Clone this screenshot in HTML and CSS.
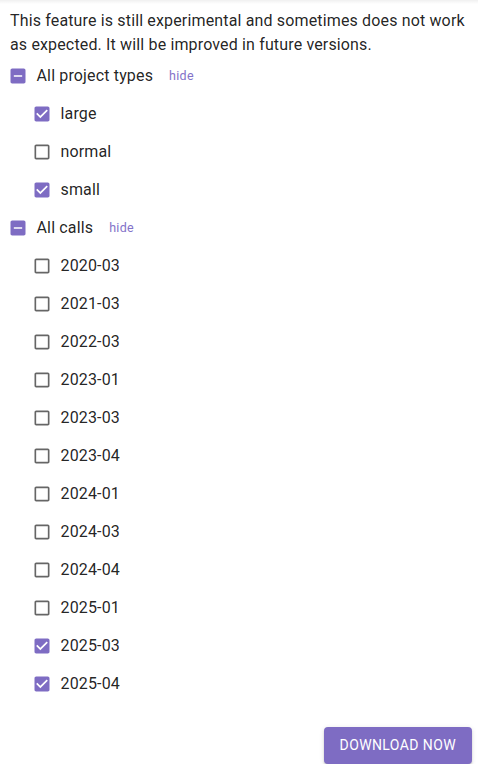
FILE: index.html
```html
<!DOCTYPE html>
<html lang="en">
<head>
<meta charset="utf-8">
<title>Download</title>
<link rel="stylesheet" href="styles.css">
</head>
<body>
<main class="panel">
  <p class="note">This feature is still experimental and sometimes does not work as expected. It will be improved in future versions.</p>

  <div class="group">
    <label class="row">
      <span class="cb"><svg viewBox="0 0 24 24" class="on"><path d="M19 3H5c-1.1 0-2 .9-2 2v14c0 1.1.9 2 2 2h14c1.1 0 2-.9 2-2V5c0-1.1-.9-2-2-2zm-2 10H7v-2h10v2z"/></svg></span>
      <span class="label">All project types</span>
      <span class="hide">hide</span>
    </label>
    <div class="children">
      <label class="row"><span class="cb"><svg viewBox="0 0 24 24" class="on"><path d="M19 3H5c-1.11 0-2 .9-2 2v14c0 1.1.89 2 2 2h14c1.11 0 2-.9 2-2V5c0-1.1-.89-2-2-2zm-9 14l-5-5 1.41-1.41L10 14.17l7.59-7.59L19 8l-9 9z"/></svg></span><span class="label">large</span></label>
      <label class="row"><span class="cb"><svg viewBox="0 0 24 24" class="off"><path d="M19 5v14H5V5h14m0-2H5c-1.1 0-2 .9-2 2v14c0 1.1.9 2 2 2h14c1.1 0 2-.9 2-2V5c0-1.1-.9-2-2-2z"/></svg></span><span class="label">normal</span></label>
      <label class="row"><span class="cb"><svg viewBox="0 0 24 24" class="on"><path d="M19 3H5c-1.11 0-2 .9-2 2v14c0 1.1.89 2 2 2h14c1.11 0 2-.9 2-2V5c0-1.1-.89-2-2-2zm-9 14l-5-5 1.41-1.41L10 14.17l7.59-7.59L19 8l-9 9z"/></svg></span><span class="label">small</span></label>
    </div>
  </div>

  <div class="group">
    <label class="row">
      <span class="cb"><svg viewBox="0 0 24 24" class="on"><path d="M19 3H5c-1.1 0-2 .9-2 2v14c0 1.1.9 2 2 2h14c1.1 0 2-.9 2-2V5c0-1.1-.9-2-2-2zm-2 10H7v-2h10v2z"/></svg></span>
      <span class="label">All calls</span>
      <span class="hide">hide</span>
    </label>
    <div class="children">
      <label class="row"><span class="cb"><svg viewBox="0 0 24 24" class="off"><path d="M19 5v14H5V5h14m0-2H5c-1.1 0-2 .9-2 2v14c0 1.1.9 2 2 2h14c1.1 0 2-.9 2-2V5c0-1.1-.9-2-2-2z"/></svg></span><span class="label">2020-03</span></label>
      <label class="row"><span class="cb"><svg viewBox="0 0 24 24" class="off"><path d="M19 5v14H5V5h14m0-2H5c-1.1 0-2 .9-2 2v14c0 1.1.9 2 2 2h14c1.1 0 2-.9 2-2V5c0-1.1-.9-2-2-2z"/></svg></span><span class="label">2021-03</span></label>
      <label class="row"><span class="cb"><svg viewBox="0 0 24 24" class="off"><path d="M19 5v14H5V5h14m0-2H5c-1.1 0-2 .9-2 2v14c0 1.1.9 2 2 2h14c1.1 0 2-.9 2-2V5c0-1.1-.9-2-2-2z"/></svg></span><span class="label">2022-03</span></label>
      <label class="row"><span class="cb"><svg viewBox="0 0 24 24" class="off"><path d="M19 5v14H5V5h14m0-2H5c-1.1 0-2 .9-2 2v14c0 1.1.9 2 2 2h14c1.1 0 2-.9 2-2V5c0-1.1-.9-2-2-2z"/></svg></span><span class="label">2023-01</span></label>
      <label class="row"><span class="cb"><svg viewBox="0 0 24 24" class="off"><path d="M19 5v14H5V5h14m0-2H5c-1.1 0-2 .9-2 2v14c0 1.1.9 2 2 2h14c1.1 0 2-.9 2-2V5c0-1.1-.9-2-2-2z"/></svg></span><span class="label">2023-03</span></label>
      <label class="row"><span class="cb"><svg viewBox="0 0 24 24" class="off"><path d="M19 5v14H5V5h14m0-2H5c-1.1 0-2 .9-2 2v14c0 1.1.9 2 2 2h14c1.1 0 2-.9 2-2V5c0-1.1-.9-2-2-2z"/></svg></span><span class="label">2023-04</span></label>
      <label class="row"><span class="cb"><svg viewBox="0 0 24 24" class="off"><path d="M19 5v14H5V5h14m0-2H5c-1.1 0-2 .9-2 2v14c0 1.1.9 2 2 2h14c1.1 0 2-.9 2-2V5c0-1.1-.9-2-2-2z"/></svg></span><span class="label">2024-01</span></label>
      <label class="row"><span class="cb"><svg viewBox="0 0 24 24" class="off"><path d="M19 5v14H5V5h14m0-2H5c-1.1 0-2 .9-2 2v14c0 1.1.9 2 2 2h14c1.1 0 2-.9 2-2V5c0-1.1-.9-2-2-2z"/></svg></span><span class="label">2024-03</span></label>
      <label class="row"><span class="cb"><svg viewBox="0 0 24 24" class="off"><path d="M19 5v14H5V5h14m0-2H5c-1.1 0-2 .9-2 2v14c0 1.1.9 2 2 2h14c1.1 0 2-.9 2-2V5c0-1.1-.9-2-2-2z"/></svg></span><span class="label">2024-04</span></label>
      <label class="row"><span class="cb"><svg viewBox="0 0 24 24" class="off"><path d="M19 5v14H5V5h14m0-2H5c-1.1 0-2 .9-2 2v14c0 1.1.9 2 2 2h14c1.1 0 2-.9 2-2V5c0-1.1-.9-2-2-2z"/></svg></span><span class="label">2025-01</span></label>
      <label class="row"><span class="cb"><svg viewBox="0 0 24 24" class="on"><path d="M19 3H5c-1.11 0-2 .9-2 2v14c0 1.1.89 2 2 2h14c1.11 0 2-.9 2-2V5c0-1.1-.89-2-2-2zm-9 14l-5-5 1.41-1.41L10 14.17l7.59-7.59L19 8l-9 9z"/></svg></span><span class="label">2025-03</span></label>
      <label class="row"><span class="cb"><svg viewBox="0 0 24 24" class="on"><path d="M19 3H5c-1.11 0-2 .9-2 2v14c0 1.1.89 2 2 2h14c1.11 0 2-.9 2-2V5c0-1.1-.89-2-2-2zm-9 14l-5-5 1.41-1.41L10 14.17l7.59-7.59L19 8l-9 9z"/></svg></span><span class="label">2025-04</span></label>
    </div>
  </div>

  <div class="actions">
    <button class="btn" type="button">Download now</button>
  </div>
</main>
</body>
</html>
```

FILE: styles.css
```css
html, body {
  margin: 0;
  padding: 0;
}
body {
  font-family: Roboto, "Noto Sans", Arial, sans-serif;
  color: rgba(0, 0, 0, 0.87);
  background: #fff linear-gradient(rgba(0, 0, 0, 0.06), rgba(0, 0, 0, 0)) no-repeat;
  background-size: 100% 4px;
}
.panel {
  padding: 8.5px 6px 0 10px;
}
.note {
  margin: 0;
  font-size: 16px;
  line-height: 24px;
  letter-spacing: 0.15px;
}
.group {
  display: flex;
  flex-direction: column;
}
.children {
  display: flex;
  flex-direction: column;
  padding-left: 24px;
}
.row {
  display: flex;
  align-items: center;
  height: 38px;
  margin-left: -11.5px;
  font-size: 16px;
  letter-spacing: 0.15px;
}
.cb {
  width: 38px;
  height: 38px;
  display: flex;
  align-items: center;
  justify-content: center;
  flex: none;
}
.cb svg {
  width: 20px;
  height: 20px;
}
.cb .on {
  fill: #7e6cc3;
}
.cb .off {
  fill: rgba(0, 0, 0, 0.6);
}
.label {
  line-height: 24px;
}
.hide {
  margin-left: 16px;
  font-size: 12.5px;
  font-weight: 400;
  color: #8372c9;
  letter-spacing: 0.3px;
}
.actions {
  display: flex;
  justify-content: flex-end;
  margin-top: 24.5px;
}
.btn {
  font-family: Roboto, "Noto Sans", Arial, sans-serif;
  font-size: 14px;
  font-weight: 400;
  letter-spacing: 0.4px;
  text-transform: uppercase;
  line-height: 24px;
  color: #fff;
  background: #7e6cc3;
  border: none;
  border-radius: 4px;
  padding: 6px 16px;
  height: 36.5px;
  box-shadow: 0 3px 1px -2px rgba(0,0,0,0.2), 0 2px 2px 0 rgba(0,0,0,0.14), 0 1px 5px 0 rgba(0,0,0,0.12);
}
```
